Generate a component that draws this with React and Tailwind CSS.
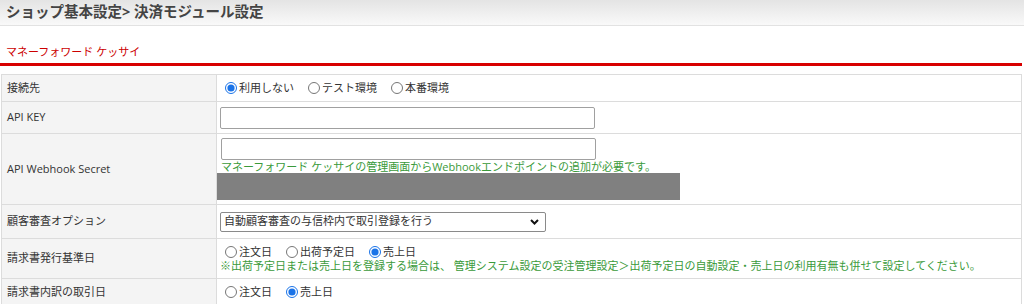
import { useState } from "react";

function Radio({ name, label, checked }) {
  return (
    <label className="inline-flex items-center mr-[14px]">
      <input
        type="radio"
        name={name}
        defaultChecked={checked}
        className="w-[12px] h-[12px] m-0 mr-[2px] accent-[#1a73e8]"
      />
      <span>{label}</span>
    </label>
  );
}

function Row({ label, height, children, pad = true }) {
  return (
    <tr className={height}>
      <th className="w-[215px] bg-[#f4f4f4] border border-[#dcdcdc] pl-[5px] text-left font-normal align-middle">
        {label}
      </th>
      <td className={`border border-[#dcdcdc] align-middle ${pad ? "pl-[3px]" : "pl-0"}`}>
        {children}
      </td>
    </tr>
  );
}

export default function App() {
  const [option, setOption] = useState("auto");

  return (
    <div
      className="w-[1024px] h-[304px] overflow-hidden bg-white text-[11px] text-[#333]"
      style={{ fontFamily: '"Open Sans", "Noto Sans CJK JP", sans-serif' }}
    >
      <div className="h-[26px] bg-gradient-to-b from-[#e4e4e4] to-[#f9f9f9] border-b border-[#e2e2e2] pl-[6px] flex items-center">
        <h1 className="text-[14.5px] font-bold text-[#444] leading-none">
          ショップ基本設定&gt; 決済モジュール設定
        </h1>
      </div>

      <div className="pt-[19px] pr-[2px]">
        <h2 className="pl-[6px] text-[11px] text-[#cc0000] leading-[14px] pb-[4px]">
          マネーフォワード ケッサイ
        </h2>
        <div className="h-[3px] bg-[#d80000]" />

        <table className="mt-[8px] w-[1021px] ml-[1px] border-collapse">
          <tbody>
            <Row label="接続先" height="h-[27px]">
              <div className="flex items-center pl-[5px]">
                <Radio name="env" label="利用しない" checked />
                <Radio name="env" label="テスト環境" />
                <Radio name="env" label="本番環境" />
              </div>
            </Row>
            <Row label="API KEY" height="h-[32px]">
              <input
                type="text"
                className="block w-[375px] h-[22px] border border-[#a0a0a0] rounded-[2px] bg-white"
              />
            </Row>
            <Row label="API Webhook Secret" height="h-[70px]" pad={false}>
              <div className="pt-[4px] pb-[4px]">
                <input
                  type="text"
                  className="block ml-[4px] w-[375px] h-[22px] border border-[#a0a0a0] rounded-[2px] bg-white"
                />
                <p className="ml-[4px] text-[#3a9a3a] leading-[13px]">
                  マネーフォワード ケッサイの管理画面からWebhookエンドポイントの追加が必要です。
                </p>
                <div className="w-[463px] h-[27px] bg-[#808080]" />
              </div>
            </Row>
            <Row label="顧客審査オプション" height="h-[34px]">
              <div className="relative w-[326px] h-[20px]">
                <select
                  value={option}
                  onChange={(e) => setOption(e.target.value)}
                  className="appearance-none w-full h-full border border-[#8a8a8a] rounded-[2px] bg-white pl-[3px] text-[11px]"
                >
                  <option value="auto">自動顧客審査の与信枠内で取引登録を行う</option>
                  <option value="manual">手動で取引登録を行う</option>
                </select>
                <svg
                  className="absolute right-[7px] top-[7px] pointer-events-none"
                  width="9"
                  height="6"
                  viewBox="0 0 9 6"
                >
                  <path d="M1 1 L4.5 4.5 L8 1" fill="none" stroke="#111" strokeWidth="2" />
                </svg>
              </div>
            </Row>
            <Row label="請求書発行基準日" height="h-[40px]">
              <div className="flex items-center pl-[5px] leading-[14px]">
                <Radio name="invoice" label="注文日" />
                <Radio name="invoice" label="出荷予定日" />
                <Radio name="invoice" label="売上日" checked />
              </div>
              <p className="text-[#3a9a3a] leading-[14px]">
                ※出荷予定日または売上日を登録する場合は、 管理システム設定の受注管理設定＞出荷予定日の自動設定・売上日の利用有無も併せて設定してください。
              </p>
            </Row>
            <Row label="請求書内訳の取引日" height="h-[27px]">
              <div className="flex items-center pl-[5px]">
                <Radio name="detail" label="注文日" />
                <Radio name="detail" label="売上日" checked />
              </div>
            </Row>
          </tbody>
        </table>
      </div>
    </div>
  );
}
